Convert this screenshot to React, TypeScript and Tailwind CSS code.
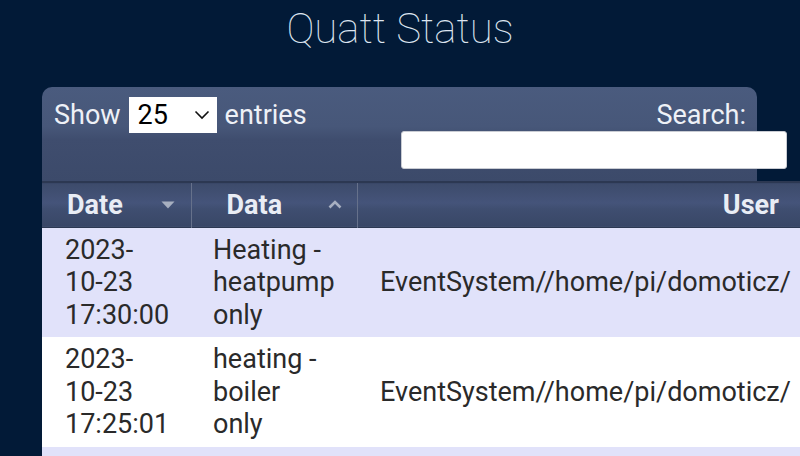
import React from "react";

type Row = { date: string[]; data: string[]; user: string };

const rows: Row[] = [
  {
    date: ["2023-", "10-23", "17:30:00"],
    data: ["Heating -", "heatpump", "only"],
    user: "EventSystem//home/pi/domoticz/",
  },
  {
    date: ["2023-", "10-23", "17:25:01"],
    data: ["heating -", "boiler", "only"],
    user: "EventSystem//home/pi/domoticz/",
  },
];

function SortDown() {
  return (
    <svg width="14" height="8" viewBox="0 0 14 8">
      <path d="M0.5 0.5 L13.5 0.5 L7 7.5 Z" fill="#a7afc0" />
    </svg>
  );
}

function SortUp() {
  return (
    <svg width="14" height="9" viewBox="0 0 14 9">
      <path d="M1.5 7.5 L7 2 L12.5 7.5" fill="none" stroke="#a7afc0" strokeWidth="2.6" />
    </svg>
  );
}

export default function App() {
  return (
    <div className="w-[800px] h-[456px] overflow-hidden bg-[#021a37] font-['Roboto',sans-serif]">
      <h1 className="h-[87px] pt-[4px] text-center text-[42px] leading-[50px] font-thin text-[#dde5f0]">
        Quatt Status
      </h1>

      <div className="ml-[42px] w-[758px]">
        {/* toolbar */}
        <div className="w-[715px] h-[94px] rounded-t-[10px] pl-[12px] pr-[11px] pt-[10px] flex justify-between bg-[linear-gradient(to_bottom,#4a5b7e_0%,#475779_42%,#3f4d6e_56%,#3c4a6a_100%)]">
          <div className="flex items-center h-[36px] gap-[8px] text-[27px] text-[#eef1f7]">
            <span>Show</span>
            <div className="w-[88px] h-[36px] bg-white flex items-center justify-between pl-[9px] pr-[7px] text-black">
              <span>25</span>
              <svg width="16" height="10" viewBox="0 0 16 10">
                <path d="M1.5 1.5 L8 8 L14.5 1.5" fill="none" stroke="#111" strokeWidth="1.6" />
              </svg>
            </div>
            <span>entries</span>
          </div>
          <div className="flex flex-col items-end">
            <span className="h-[36px] leading-[36px] text-[27px] text-[#eef1f7]">Search:</span>
            <input
              className="mt-[-2px] mr-[-41px] w-[386px] h-[38px] bg-white rounded-[3px] border border-[#c9ccd3] outline-none"
              type="text"
            />
          </div>
        </div>

        {/* table */}
        <table className="w-[758px] table-fixed border-collapse text-[27px]">
          <colgroup>
            <col className="w-[149px]" />
            <col className="w-[166px]" />
            <col />
          </colgroup>
          <thead>
            <tr className="h-[45px] border-t-2 border-t-[#2c3852] border-b border-b-[#2c3852] bg-[linear-gradient(to_bottom,#3d4b6b_0%,#45547a_45%,#3f4e70_60%,#394767_100%)] text-[#e9edf5] font-bold">
              <th className="p-0 border-r border-r-[#66718b]">
                <div className="flex items-center justify-between pl-[25px] pr-[16px]">
                  <span>Date</span>
                  <SortDown />
                </div>
              </th>
              <th className="p-0 border-r border-r-[#66718b]">
                <div className="flex items-center justify-between pl-[35px] pr-[15px]">
                  <span>Data</span>
                  <SortUp />
                </div>
              </th>
              <th className="p-0 text-right pr-[21px]">User</th>
            </tr>
          </thead>
          <tbody>
            {rows.map((r, i) => (
              <tr
                key={i}
                className={
                  i % 2 === 0
                    ? "h-[110px] bg-[#e1e2fa] text-[#2a2a2a]"
                    : "h-[110px] bg-white text-[#2a2a2a]"
                }
              >
                <td className="pl-[23px] leading-[32.5px] align-middle">
                  {r.date.map((l) => (
                    <div key={l}>{l}</div>
                  ))}
                </td>
                <td className="pl-[22px] leading-[32.5px] align-middle">
                  {r.data.map((l) => (
                    <div key={l}>{l}</div>
                  ))}
                </td>
                <td className="pl-[23px] align-middle whitespace-nowrap overflow-hidden">
                  {r.user}
                </td>
              </tr>
            ))}
            <tr className="h-[110px] bg-[#e1e2fa]">
              <td />
              <td />
              <td />
            </tr>
          </tbody>
        </table>
      </div>
    </div>
  );
}
